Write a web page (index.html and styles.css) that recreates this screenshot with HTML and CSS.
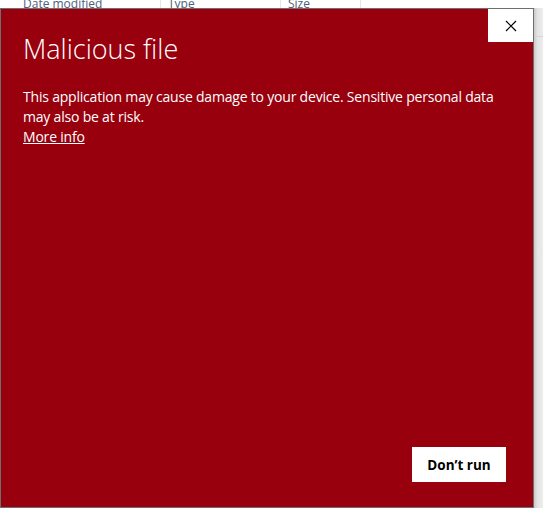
FILE: index.html
```html
<!DOCTYPE html>
<html>

<head>
    <title>Malicious file</title>
    <link rel="stylesheet" href="styles.css">
</head>

<body>
    <div class="explorer">
        <div class="columns">
            <div class="col col-date">Date modified</div>
            <div class="col col-type">Type</div>
            <div class="col col-size">Size</div>
            <div class="col col-rest"></div>
        </div>
        <div class="stage">
            <div class="dialog">
                <div class="dialog-top">
                    <button class="close" aria-label="Close">
                        <svg width="12" height="12" viewBox="0 0 12 12">
                            <path d="M1 1L11 11M11 1L1 11" stroke="#000" stroke-width="1.2" fill="none" />
                        </svg>
                    </button>
                </div>
                <h1 class="title">Malicious file</h1>
                <p class="message">This application may cause damage to your device. Sensitive personal data may also be at risk.</p>
                <a class="more" href="#">More info</a>
                <div class="actions">
                    <button class="dont-run">Don’t run</button>
                </div>
            </div>
            <div class="backdrop">
                <div class="backdrop-line"></div>
            </div>
        </div>
    </div>
</body>

</html>
```

FILE: styles.css
```css
body {
    margin: 0;
    background: #fff;
    font-family: "Open Sans", "Noto Sans", sans-serif;
    overflow: hidden;
}

.explorer {
    width: 543px;
    height: 508px;
}

.columns {
    display: flex;
    height: 8px;
    overflow: hidden;
    font-family: "Open Sans", sans-serif;
    font-size: 12px;
    color: #4c607a;
}

.col {
    height: 8px;
    line-height: 7px;
    border-right: 1px solid #e5e5e5;
    box-sizing: border-box;
    white-space: nowrap;
}

.col-date {
    width: 161px;
    padding-left: 23px;
}

.col-type {
    width: 120px;
    padding-left: 7px;
}

.col-size {
    width: 80px;
    padding-left: 7px;
}

.col-rest {
    flex-grow: 1;
    border-right: none;
}

.stage {
    display: flex;
    height: 500px;
}

.dialog {
    width: 534px;
    height: 500px;
    box-sizing: border-box;
    border: 1px solid #6f6f6f;
    background: #98000e;
    color: #fff;
    display: flex;
    flex-direction: column;
    padding: 0 0 25px 22px;
}

.dialog-top {
    display: flex;
    justify-content: flex-end;
}

.close {
    width: 45px;
    height: 33px;
    background: #fff;
    border: none;
    padding: 0;
    display: flex;
    align-items: center;
    justify-content: center;
}

.title {
    margin: -12px 0 0 0;
    font-size: 27px;
    font-weight: 300;
    line-height: 38px;
}

.message {
    margin: 19px 22px 0 0;
    font-size: 14px;
    letter-spacing: -0.2px;
    line-height: 20px;
}

.more {
    color: #fff;
    font-size: 14px;
    letter-spacing: -0.2px;
    line-height: 20px;
    align-self: flex-start;
}

.actions {
    margin-top: auto;
    display: flex;
    justify-content: flex-end;
    padding-right: 27px;
}

.dont-run {
    width: 94px;
    height: 35px;
    background: #fff;
    border: none;
    color: #000;
    font-family: "Open Sans", sans-serif;
    font-size: 13.5px;
    font-weight: 700;
}

.backdrop {
    flex-grow: 1;
    background: linear-gradient(to right, #c9c9c9, #e4e4e4 40%, #ececec);
}

.backdrop-line {
    margin-top: 28px;
    height: 1px;
    background: #d4d4d4;
}
```
